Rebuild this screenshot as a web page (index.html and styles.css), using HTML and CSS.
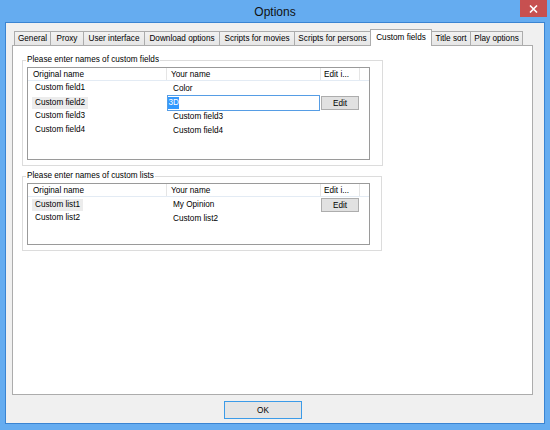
FILE: index.html
```html
<!DOCTYPE html>
<html>
<head>
<meta charset="utf-8">
<title>Options</title>
<link rel="stylesheet" href="styles.css">
</head>
<body>
<div class="window">
  <div class="titlebar">
    <span class="title">Options</span>
    <div class="close">
      <svg width="9" height="8" viewBox="0 0 9 8"><path d="M1 0.5 L8 7.5 M8 0.5 L1 7.5" stroke="#fff" stroke-width="1.6"/></svg>
    </div>
  </div>
  <div class="frame">
    <div class="client">
      <div class="tabctl">
        <div class="tabs">
          <div class="tab">General</div>
          <div class="tab">Proxy</div>
          <div class="tab">User interface</div>
          <div class="tab">Download options</div>
          <div class="tab">Scripts for movies</div>
          <div class="tab">Scripts for persons</div>
          <div class="tab active">Custom fields</div>
          <div class="tab">Title sort</div>
          <div class="tab">Play options</div>
        </div>
        <div class="panel">
          <fieldset class="group">
            <legend>Please enter names of custom fields</legend>
            <div class="listview lv-fields">
              <div class="lv-row lv-header">
                <div class="hcell h1">Original name</div>
                <div class="hcell h2">Your name</div>
                <div class="hcell h3">Edit i...</div>
                <div class="hcell filler"></div>
              </div>
              <div class="lv-row">
                <div class="cell c1"><span>Custom field1</span></div>
                <div class="cell c2">Color</div>
              </div>
              <div class="lv-row">
                <div class="cell c1"><span class="sel">Custom field2</span></div>
                <div class="cell c2 editing"><div class="editbox"><span class="hl">3D</span></div></div>
                <div class="cell c3"><div class="btn editbtn">Edit</div></div>
              </div>
              <div class="lv-row">
                <div class="cell c1"><span>Custom field3</span></div>
                <div class="cell c2">Custom field3</div>
              </div>
              <div class="lv-row">
                <div class="cell c1"><span>Custom field4</span></div>
                <div class="cell c2">Custom field4</div>
              </div>
            </div>
          </fieldset>
          <fieldset class="group group2">
            <legend>Please enter names of custom lists</legend>
            <div class="listview lv-lists">
              <div class="lv-row lv-header">
                <div class="hcell h1">Original name</div>
                <div class="hcell h2">Your name</div>
                <div class="hcell h3">Edit i...</div>
                <div class="hcell filler"></div>
              </div>
              <div class="lv-row">
                <div class="cell c1"><span class="sel">Custom list1</span></div>
                <div class="cell c2">My Opinion</div>
                <div class="cell c3"><div class="btn editbtn">Edit</div></div>
              </div>
              <div class="lv-row">
                <div class="cell c1"><span>Custom list2</span></div>
                <div class="cell c2">Custom list2</div>
              </div>
            </div>
          </fieldset>
        </div>
      </div>
      <div class="footer">
        <div class="btn okbtn">OK</div>
      </div>
    </div>
  </div>
</div>
</body>
</html>
```

FILE: styles.css
```css
* { box-sizing: border-box; }

body {
  margin: 0;
  font-family: "Liberation Sans", Arial, sans-serif;
  font-size: 8.2px;
  color: #000;
  background: #65acf0;
}

.window {
  width: 550px;
  height: 430px;
  background: #65acf0;
  display: flex;
  flex-direction: column;
}

.titlebar {
  height: 22px;
  flex: none;
  display: grid;
  grid-template-columns: 1fr auto 1fr;
}

.title {
  grid-column: 2;
  align-self: center;
  font-size: 12px;
  color: #111;
  padding-top: 1px;
}

.close {
  grid-column: 3;
  justify-self: end;
  align-self: start;
  width: 27px;
  height: 17px;
  margin-right: 3px;
  background: #c75050;
  display: flex;
  align-items: center;
  justify-content: center;
}

.frame {
  flex: 1;
  padding: 0 5px 6px 5px;
  display: flex;
}

.client {
  flex: 1;
  border: 1px solid #3a84d2;
  background: #f0f0f0;
  display: flex;
  flex-direction: column;
}

.tabctl {
  margin: 6px 11px 0 6px;
}

.tabs {
  height: 16px;
  padding-left: 2px;
  display: flex;
  align-items: flex-end;
}

.tab {
  height: 14px;
  margin-right: -1px;
  border: 1px solid #acacac;
  border-bottom: none;
  background: linear-gradient(#f2f2f2, #e6e6e6);
  display: flex;
  align-items: center;
  justify-content: center;
  white-space: nowrap;
}

.tab.active {
  height: 17px;
  margin-bottom: -1px;
  background: #fff;
  position: relative;
  z-index: 1;
  padding-bottom: 2px;
}

.tab:nth-child(1) { width: 37px; }
.tab:nth-child(2) { width: 34px; }
.tab:nth-child(3) { width: 62px; }
.tab:nth-child(4) { width: 76px; }
.tab:nth-child(5) { width: 76px; }
.tab:nth-child(6) { width: 77px; }
.tab:nth-child(7) { width: 62px; }
.tab:nth-child(8) { width: 40px; }
.tab:nth-child(9) { width: 53px; }

.panel {
  height: 350px;
  border: 1px solid #acacac;
  background: #fff;
  padding: 0 0 0 9px;
}

.group {
  width: 361px;
  margin: 9px 0 0 0;
  padding: 2px 11px 5px 4px;
  border: 1px solid #dcdcdc;
  min-width: 0;
}

.group2 {
  width: 360px;
  margin-top: 5px;
}

.group legend {
  padding: 0 1px;
  margin-left: -1px;
  line-height: 10px;
  height: 10px;
}

.listview {
  width: 343px;
  border: 1px solid #9a9a9a;
  background: #fff;
}

.lv-fields { height: 93px; }
.lv-lists { height: 62px; }

.lv-row {
  display: grid;
  grid-template-columns: 139px 154px 39px 1fr;
  height: 14px;
  align-items: center;
}

.lv-header {
  height: 13px;
  border-bottom: 1px solid #e3ebf4;
}

.hcell {
  height: 100%;
  border-right: 1px solid #e5e5e5;
  display: flex;
  align-items: center;
  white-space: nowrap;
  overflow: hidden;
}

.hcell.filler { border-right: none; }
.h1 { padding-left: 5px; }
.h2 { padding-left: 4px; }
.h3 { padding-left: 3px; }

.cell {
  white-space: nowrap;
}

.c1 { padding-left: 4px; }
.c1 span {
  display: inline-block;
  padding: 0 3px;
  line-height: 12px;
}
.c1 .sel { background: #ececec; }

.c2 { padding-left: 6px; }
.c2.editing { padding-left: 0; }

.editbox {
  width: 153px;
  height: 16px;
  border: 1px solid #569de5;
  background: #fff;
  padding-left: 0;
  display: flex;
  align-items: center;
}

.hl {
  background: #3399ff;
  color: #fff;
  line-height: 12px;
  padding: 0 0.5px;
}

.c3 { align-self: start; }

.btn {
  border: 1px solid #adadad;
  background: #e1e1e1;
  display: flex;
  align-items: center;
  justify-content: center;
}

.editbtn {
  width: 38px;
  height: 14px;
  margin-top: 1px;
}

.footer {
  padding: 6px 0 0 218px;
}

.okbtn {
  width: 78px;
  height: 18px;
  border-color: #3c9be8;
  background: #e5e5e5;
}
```
